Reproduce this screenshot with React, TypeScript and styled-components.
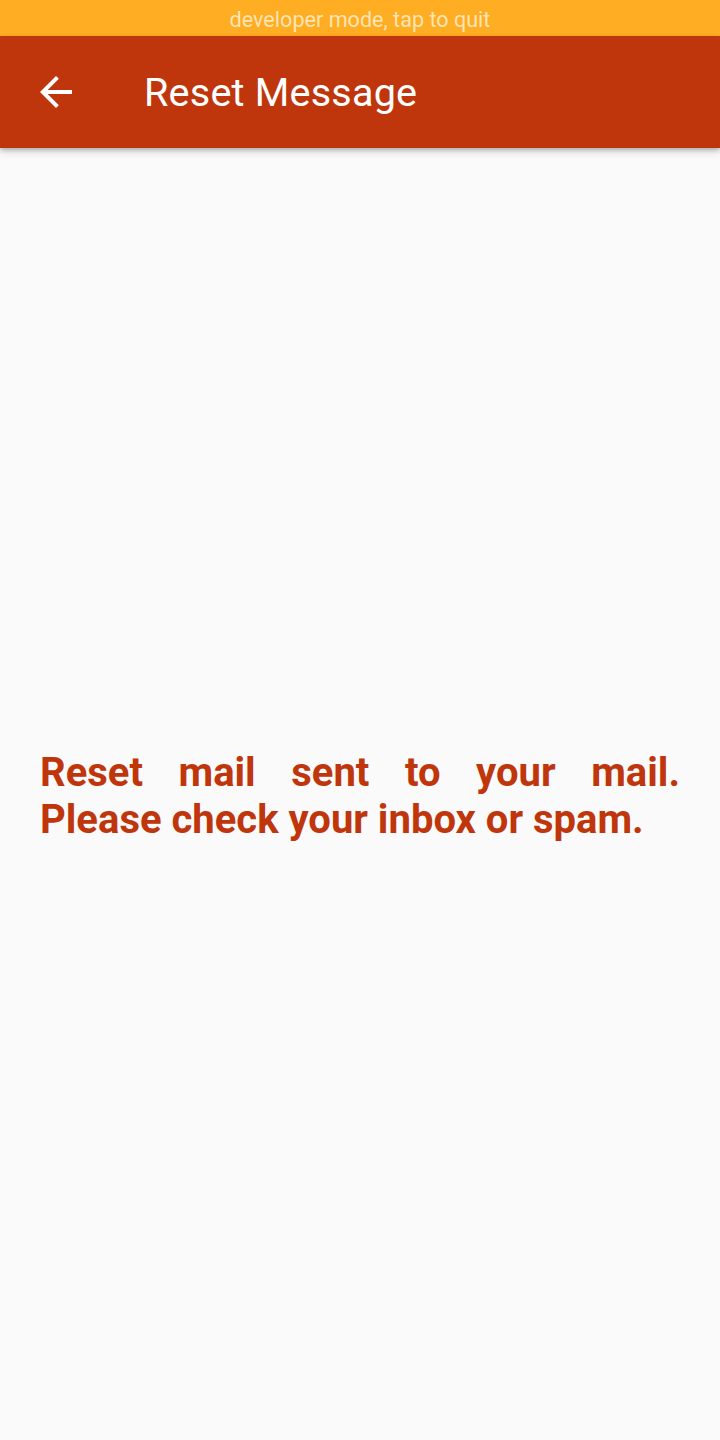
import React from "react";
import styled, { createGlobalStyle } from "styled-components";

const Global = createGlobalStyle`
  html, body { margin: 0; padding: 0; background: #fafafa; }
  body { font-family: Roboto, "Noto Sans", sans-serif; }
  * { box-sizing: border-box; }
`;

const Screen = styled.div`
  width: 720px;
  height: 1440px;
  display: flex;
  flex-direction: column;
  background: #fafafa;
  overflow: hidden;
`;

const DevBanner = styled.div`
  height: 36px;
  flex: none;
  background: #ffad22;
  color: #fee4b4;
  font-size: 21.6px;
  display: flex;
  align-items: center;
  justify-content: center;
  padding-top: 2px;
`;

const AppBar = styled.header`
  height: 112px;
  flex: none;
  background: #bf360c;
  display: flex;
  align-items: center;
  padding-left: 32px;
  box-shadow: 0 2px 4px rgba(0, 0, 0, 0.2), 0 4px 8px rgba(0, 0, 0, 0.14);
  position: relative;
  z-index: 1;
`;

const BackButton = styled.button`
  width: 48px;
  height: 48px;
  padding: 0;
  border: 0;
  background: transparent;
  display: flex;
  align-items: center;
  justify-content: center;
  color: #fff;
`;

const Title = styled.h1`
  margin: 0 0 0 64px;
  font-size: 39.6px;
  font-weight: 400;
  color: #fff;
  letter-spacing: 0.2px;
`;

const Body = styled.main`
  flex: 1;
  display: flex;
  align-items: center;
  padding: 4px 40px 0;
`;

const Message = styled.p`
  margin: 0;
  width: 100%;
  font-size: 40px;
  font-weight: 700;
  line-height: 47px;
  color: #bf360c;
  text-align: justify;
`;

export default function App() {
  return (
    <>
      <Global />
      <Screen>
        <DevBanner>developer mode, tap to quit</DevBanner>
        <AppBar>
          <BackButton aria-label="Back">
            <svg width="48" height="48" viewBox="0 0 24 24" fill="currentColor">
              <path d="M20 11H7.83l5.59-5.59L12 4l-8 8 8 8 1.41-1.41L7.83 13H20v-2z" />
            </svg>
          </BackButton>
          <Title>Reset Message</Title>
        </AppBar>
        <Body>
          <Message>
            Reset mail sent to your mail. Please check your inbox or spam.
          </Message>
        </Body>
      </Screen>
    </>
  );
}
